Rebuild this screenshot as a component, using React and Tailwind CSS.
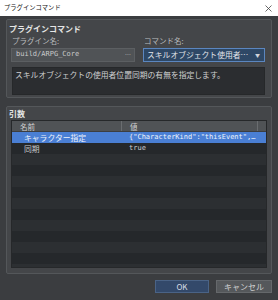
const jp = { fontFamily: '"Noto Sans CJK JP", "Noto Sans", sans-serif' }
const mono = { fontFamily: '"DejaVu Sans Mono", "Liberation Mono", monospace' }

const rows = [
  { name: 'キャラクター指定', value: '{"CharacterKind":"thisEvent",…', selected: true },
  { name: '同期', value: 'true' },
]

export default function App() {
  const filler = Array.from({ length: 12 })
  return (
    <div className="w-[278px] h-[300px] flex flex-col bg-[#3b3d40] overflow-hidden" style={jp}>
      <div className="h-[16px] shrink-0 bg-white flex items-center justify-between pl-[4px] pr-[6px]">
        <span className="text-[6.3px] text-[#111] leading-none">プラグインコマンド</span>
        <svg width="7" height="7" viewBox="0 0 7 7" className="text-[#444]">
          <path d="M0.5 0.5L6.5 6.5M6.5 0.5L0.5 6.5" stroke="currentColor" strokeWidth="0.8" />
        </svg>
      </div>

      <div className="flex-1 min-h-0 flex flex-col px-[6px] pt-[3px] pb-[7px]">
        <div className="h-[79px] shrink-0 border border-[#54575a] rounded-[2px] bg-[#444649] flex flex-col px-[4px]">
          <div className="text-[8px] font-bold text-[#e6e6e6] leading-none mt-[5px] -ml-[2px]">プラグインコマンド</div>
          <div className="flex gap-[8px] mt-[4px]">
            <div className="w-[124px] flex flex-col">
              <span className="text-[7.5px] text-[#b9bbbd] leading-none pl-[1px]">プラグイン名:</span>
              <div className="mt-[3px] h-[14px] border border-[#5c5f62] bg-[#505356] flex items-center justify-between pl-[4px] pr-[3px]">
                <span className="text-[7px] text-[#c8c9ca] leading-none" style={mono}>build/ARPG_Core</span>
                <span className="text-[6px] text-[#c8c9ca] leading-none">…</span>
              </div>
            </div>
            <div className="w-[122px] flex flex-col">
              <span className="text-[7.5px] text-[#b9bbbd] leading-none pl-[1px]">コマンド名:</span>
              <div className="mt-[3px] h-[14px] border border-[#5b86bf] bg-[#2e4866] flex items-center justify-between pl-[3px] pr-[4px]">
                <span className="text-[7.8px] text-[#e2e5ea] leading-none whitespace-nowrap">スキルオブジェクト使用者…</span>
                <span className="text-[5px] text-[#d0d4da] leading-none">▼</span>
              </div>
            </div>
          </div>
          <div className="mt-[5px] h-[28px] mr-[2px] ml-[1px] border border-[#26282a] bg-[#2b2d30] px-[2px] pt-[3px]">
            <span className="text-[7.8px] text-[#cfd0d1] leading-none block whitespace-nowrap">スキルオブジェクトの使用者位置同期の有無を指定します。</span>
          </div>
        </div>

        <div className="mt-[8px] flex-1 min-h-0 border border-[#54575a] rounded-[2px] bg-[#444649] flex flex-col px-[4px] pb-[5px]">
          <div className="text-[8px] font-bold text-[#e6e6e6] leading-none mt-[3px] -ml-[2px]">引数</div>
          <div className="mt-[2px] flex-1 min-h-0 border border-[#26282a] bg-[#2b2d30] flex flex-col overflow-hidden">
            <div className="h-[11px] shrink-0 flex bg-[#505356] border-b border-[#3c3e41]">
              <div className="w-[110px] border-r border-[#6a6d70] pl-[8px] text-[7.5px] text-[#d0d1d2] leading-[11px]">名前</div>
              <div className="w-[136px] border-r border-[#6a6d70] pl-[8px] text-[7.5px] text-[#d0d1d2] leading-[11px]">値</div>
              <div className="flex-1"></div>
            </div>
            {rows.map((r, i) => (
              <div key={i} className={`h-[11px] shrink-0 flex ${r.selected ? 'bg-[#4a7fd4]' : i % 2 ? 'bg-[#25282b]' : 'bg-[#2c2f32]'}`}>
                <div className={`w-[110px] pl-[12px] text-[7.8px] leading-[11px] ${r.selected ? 'text-[#eef3fb]' : 'text-[#c9cacb]'}`}>{r.name}</div>
                <div className={`w-[136px] pl-[7px] text-[7px] leading-[11px] whitespace-nowrap overflow-hidden ${r.selected ? 'text-[#eef3fb]' : 'text-[#c9cacb]'}`} style={mono}>{r.value}</div>
              </div>
            ))}
            {filler.map((_, i) => (
              <div key={i} className={`h-[11px] shrink-0 ${i % 2 ? 'bg-[#25282b]' : 'bg-[#2c2f32]'}`}></div>
            ))}
          </div>
        </div>

        <div className="mt-[6px] shrink-0 flex justify-end gap-[7px]">
          <button className="w-[54px] h-[13px] bg-[#33496a] border border-[#4a6386] text-[8px] text-[#d8dde5] leading-none">OK</button>
          <button className="w-[56px] h-[13px] bg-[#55585b] border border-[#65686b] text-[8px] text-[#d0d1d2] leading-none">キャンセル</button>
        </div>
      </div>
    </div>
  )
}
